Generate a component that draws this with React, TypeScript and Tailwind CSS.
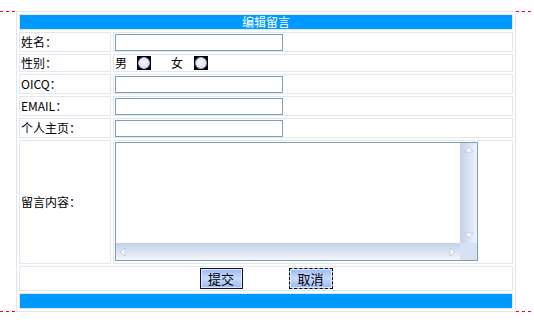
import React from 'react'

const Label = ({ text, h }: { text: string; h: string }) => (
  <div className={`${h} flex items-center border border-[#e0e7ef] pl-px`}>{text}</div>
)

const TextBox = () => (
  <input
    type="text"
    className="h-[17px] w-[168px] border border-[#7f9db9] bg-white outline-none"
  />
)

const Radio = () => (
  <span className="flex h-[14px] w-[14px] items-center justify-center bg-black">
    <span className="h-[12px] w-[12px] rounded-full border border-[#aab8d4] bg-[radial-gradient(circle_at_45%_40%,#f4f7fc,#d3dcef)]" />
  </span>
)

const Arrow = ({ dir }: { dir: 'up' | 'down' | 'left' | 'right' }) => {
  const pts = {
    up: '1,7 5,2 9,7',
    down: '1,2 5,7 9,2',
    left: '7,1 2,5 7,9',
    right: '2,1 7,5 2,9',
  }[dir]
  return (
    <svg width="10" height="10" viewBox="0 0 10 10">
      <polygon points={pts} fill="#ffffff" stroke="#b4c3dd" strokeWidth="0.8" />
    </svg>
  )
}

const FakeTextarea = () => (
  <div className="flex h-[119px] w-[363px] flex-col border border-[#7f9db9] bg-white">
    <div className="flex flex-1">
      <textarea className="flex-1 resize-none overflow-hidden outline-none" />
      <div className="flex w-[17px] flex-col items-center justify-between bg-gradient-to-r from-[#c3d1ea] to-[#eef2fa] py-[2px]">
        <Arrow dir="up" />
        <Arrow dir="down" />
      </div>
    </div>
    <div className="flex h-[17px]">
      <div className="flex flex-1 items-center justify-between bg-gradient-to-b from-[#c3d1ea] to-[#f3f6fb] px-[2px]">
        <Arrow dir="left" />
        <Arrow dir="right" />
      </div>
      <div className="w-[17px] bg-[#d6e1f3]" />
    </div>
  </div>
)

const Btn = ({ text, focused }: { text: string; focused?: boolean }) => (
  <button
    className={`flex h-[21px] items-center justify-center border ${
      focused ? 'w-[44px] border-dashed border-black' : 'w-[43px] border-[#101030]'
    } bg-gradient-to-b from-[#9cb9f3] via-[#c9dbfc] to-[#98b5f0] text-[13px] leading-none text-black shadow-[inset_0_0_0_1px_#dfe9fd]`}
  >
    {text}
  </button>
)

export default function App() {
  return (
    <div className="w-[534px] font-['SimSun','Noto_Sans_CJK_SC',sans-serif] text-[12px] text-black">
      {/* red dashed frame lines top and bottom, covered by the table in the middle */}
      <div className="mt-[11px] py-px [background:repeating-linear-gradient(90deg,#ff0000_0_3px,transparent_3px_6px)_top/100%_1px_no-repeat,repeating-linear-gradient(90deg,#ff0000_0_3px,transparent_3px_6px)_bottom/100%_1px_no-repeat]">
        <div className="-my-px ml-[16px] grid w-[500px] grid-cols-[92px_1fr] gap-[2px] border border-[#dfe6ef] bg-white p-[2px]">
          <div className="col-span-2 flex h-[16px] items-center justify-center border border-[#e0e7ef] bg-[#0099ff] leading-none text-white">
            编辑留言
          </div>

          <Label text="姓名：" h="h-[20px]" />
          <div className="flex h-[20px] items-start border border-[#e0e7ef] pl-px pt-px">
            <TextBox />
          </div>

          <Label text="性别：" h="h-[18px]" />
          <div className="flex h-[18px] items-center border border-[#e0e7ef] pl-px">
            <span>男</span>
            <span className="ml-[10px]">
              <Radio />
            </span>
            <span className="ml-[20px]">女</span>
            <span className="ml-[11px]">
              <Radio />
            </span>
          </div>

          <Label text="OICQ：" h="h-[20px]" />
          <div className="flex h-[20px] items-start border border-[#e0e7ef] pl-px pt-px">
            <TextBox />
          </div>

          <Label text="EMAIL：" h="h-[20px]" />
          <div className="flex h-[20px] items-start border border-[#e0e7ef] pl-px pt-px">
            <TextBox />
          </div>

          <Label text="个人主页：" h="h-[20px]" />
          <div className="flex h-[20px] items-start border border-[#e0e7ef] pl-px pt-px">
            <TextBox />
          </div>

          <Label text="留言内容：" h="h-[124px]" />
          <div className="flex h-[124px] items-start border border-[#e0e7ef] pl-px pt-px">
            <FakeTextarea />
          </div>

          <div className="col-span-2 flex h-[25px] items-center justify-center gap-[46px] border border-[#e0e7ef]">
            <Btn text="提交" />
            <Btn text="取消" focused />
          </div>

          <div className="col-span-2 h-[16px] border border-[#e0e7ef] bg-[#0099ff]" />
        </div>
      </div>
    </div>
  )
}
